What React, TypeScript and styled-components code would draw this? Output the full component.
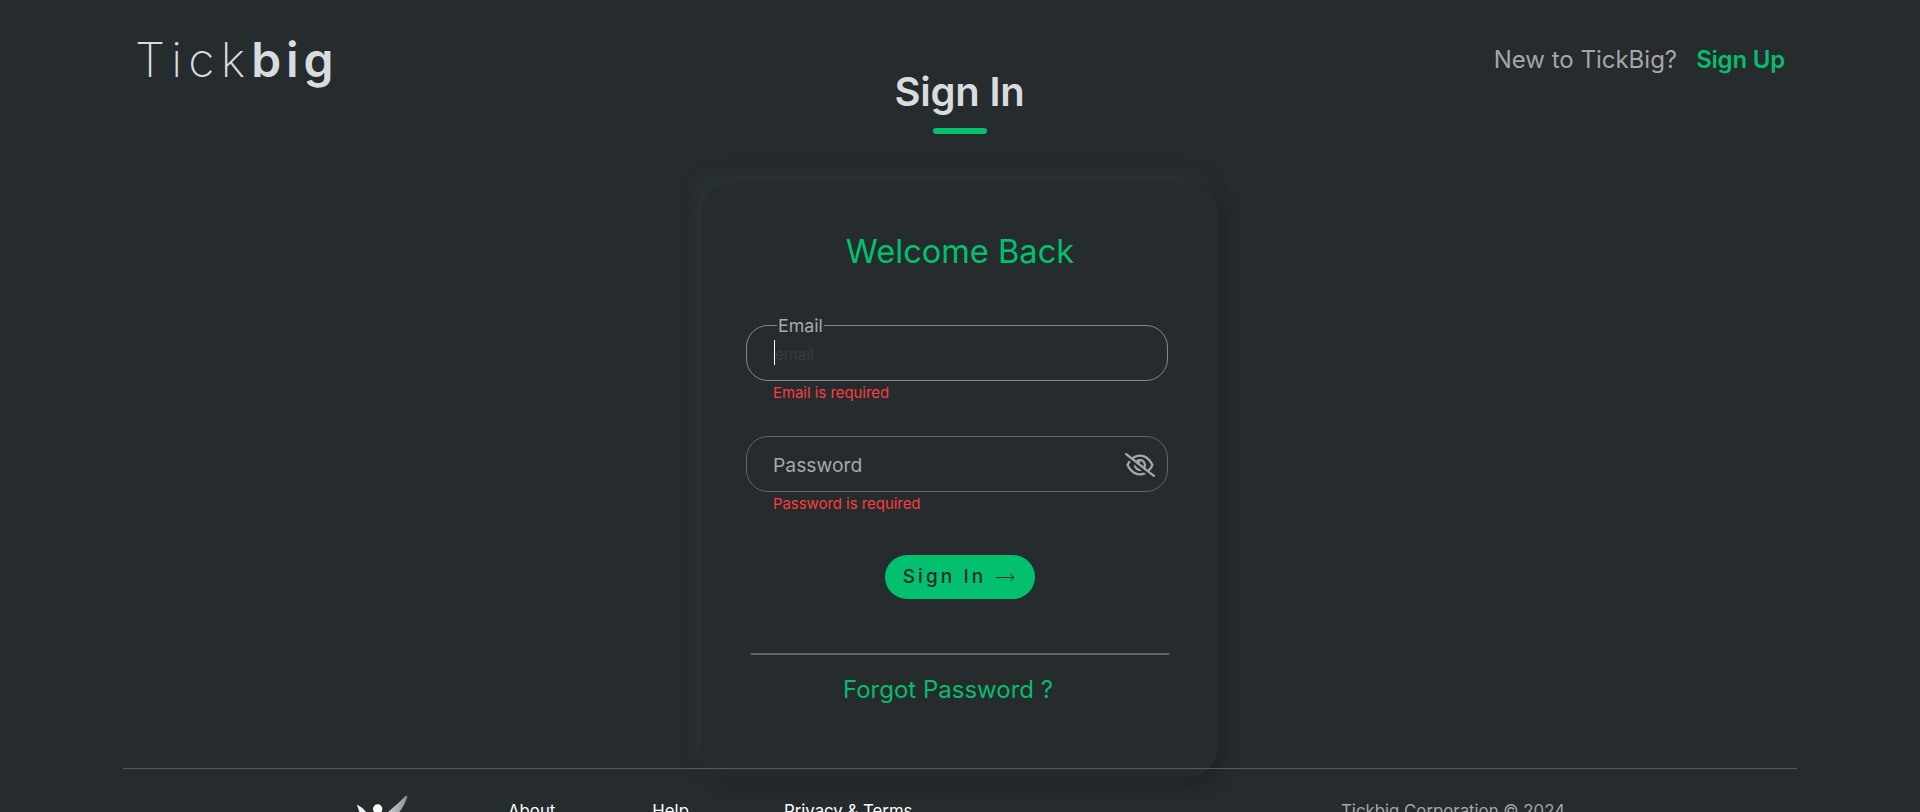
import React from "react";
import styled, { createGlobalStyle } from "styled-components";
import { FaRegEyeSlash } from "react-icons/fa6";

const GlobalStyle = createGlobalStyle`
  * { box-sizing: border-box; }
  body {
    margin: 0;
    background: #262b2d;
    color: #d9dcde;
    font-family: Inter, "Liberation Sans", sans-serif;
    overflow: hidden;
  }
`;

const Page = styled.div`
  height: 812px;
  overflow: hidden;
  display: flex;
  flex-direction: column;
`;

const Header = styled.header`
  display: flex;
  justify-content: space-between;
  align-items: center;
  height: 68px;
  padding: 52px 135px 0 135px;
  flex: none;
`;

const Logo = styled.div`
  font-size: 48px;
  font-weight: 200;
  letter-spacing: 6.2px;
  line-height: 60px;
`;

const LogoStrong = styled.span`
  font-weight: 600;
  letter-spacing: 4.8px;
`;

const Prompt = styled.div`
  display: flex;
  gap: 19px;
  font-size: 24px;
  line-height: 30px;
  color: #a6a6a6;
`;

const SignUpLink = styled.a`
  color: #07bc6c;
  font-weight: 600;
  letter-spacing: -0.2px;
`;

const Main = styled.main`
  flex: none;
  height: 700px;
  display: flex;
  flex-direction: column;
  align-items: center;
`;

const Title = styled.h1`
  margin: 0;
  font-size: 40px;
  font-weight: 600;
  line-height: 48px;
  letter-spacing: -0.2px;
  padding-right: 1px;
`;

const TitleBar = styled.div`
  flex: none;
  width: 54px;
  height: 6px;
  margin-top: 12px;
  border-radius: 3px;
  background: #03c06f;
`;

const Card = styled.section`
  flex: none;
  width: 516px;
  height: 595px;
  margin-top: 48px;
  padding: 49px 44px 0;
  border-radius: 30px;
  background: #262b2d;
  box-shadow: 6px 6px 14px #202425, -6px -6px 16px #2c3638;
`;

const Welcome = styled.h2`
  margin: 0 0 54px;
  font-size: 32.6px;
  font-weight: 400;
  line-height: 40px;
  text-align: center;
  color: #03c06f;
`;

const Field = styled.div<{ $active?: boolean }>`
  position: relative;
  display: flex;
  align-items: center;
  justify-content: space-between;
  width: 422px;
  height: 56px;
  padding: 0 12px 0 26px;
  border: 1px solid ${(p) => (p.$active ? "#858788" : "#656565")};
  border-radius: 22px;
  color: #a6a9aa;
  font-size: 19.3px;
`;

const FieldText = styled.span`
  padding-top: 1px;
`;

const FloatingLabel = styled.label`
  position: absolute;
  top: -12px;
  left: 30px;
  padding: 0 1px;
  background: #262b2d;
  font-size: 17.8px;
  line-height: 24px;
`;

const Placeholder = styled.span`
  height: 25px;
  margin: 0 0 1px 1px;
  border-left: 1px solid #ffffff;
  color: #363b3d;
  font-size: 15.6px;
  line-height: 30px;
  letter-spacing: -0.1px;
`;

const EyeToggle = styled(FaRegEyeSlash)`
  width: 30px;
  height: 24px;
  margin-top: 2px;
`;

const ErrorText = styled.p`
  margin: 0 0 33px;
  padding: 2px 0 0 27px;
  color: #fb3d3d;
  font-size: 14.9px;
  line-height: 20px;
`;

const SubmitButton = styled.button`
  display: flex;
  align-items: center;
  justify-content: center;
  gap: 10px;
  width: 150px;
  height: 44px;
  margin: 41px auto 0;
  padding: 0 2px 0 0;
  border: 0;
  border-radius: 22px;
  background: #03c06f;
  color: #262b2d;
  font: 500 19px Inter, sans-serif;
  letter-spacing: 3.1px;
`;

const ButtonText = styled.span`
  padding-bottom: 2px;
`;

const Divider = styled.hr`
  width: 418px;
  height: 2px;
  margin: 54px 0 0 5px;
  border: 0;
  background: #656565;
`;

const ForgotLink = styled.a`
  display: block;
  margin: 20px 24px 0 0;
  text-align: center;
  color: #07bc6c;
  font-size: 24px;
  line-height: 30px;
`;

const Footer = styled.footer`
  position: relative;
  flex: none;
  display: flex;
  height: 90px;
  margin: 0 123px;
  padding: 27px 0 0 233px;
  border-top: 1px solid #555a5c;
  color: #ffffff;
  font-size: 16.8px;
  line-height: 30px;
`;

const Emblem = styled.svg`
  flex: none;
  width: 52px;
  height: 40px;
`;

const FooterLink = styled.a<{ $gap: number }>`
  margin-left: ${(p) => p.$gap}px;
`;

const Copyright = styled.span`
  margin-left: auto;
  margin-right: 232px;
  color: #a6a6a6;
`;

export default function App() {
  return (
    <Page>
      <GlobalStyle />
      <Header>
        <Logo>
          Tick<LogoStrong>big</LogoStrong>
        </Logo>
        <Prompt>
          <span>New to TickBig?</span>
          <SignUpLink>Sign Up</SignUpLink>
        </Prompt>
      </Header>
      <Main>
        <Title>Sign In</Title>
        <TitleBar />
        <Card>
          <Welcome>Welcome Back</Welcome>
          <Field $active>
            <FloatingLabel>Email</FloatingLabel>
            <Placeholder>email</Placeholder>
          </Field>
          <ErrorText>Email is required</ErrorText>
          <Field>
            <FieldText>Password</FieldText>
            <EyeToggle />
          </Field>
          <ErrorText>Password is required</ErrorText>
          <SubmitButton>
            <ButtonText>Sign In</ButtonText>
            <svg width="19" height="8" viewBox="0 0 19 8" fill="none" stroke="currentColor">
              <path d="M0 4.5H18M14 1L18 4.5L14 8" />
            </svg>
          </SubmitButton>
          <Divider />
          <ForgotLink>Forgot Password ?</ForgotLink>
        </Card>
      </Main>
      <Footer>
        <Emblem viewBox="0 0 52 40">
          <defs>
            <linearGradient id="wing" x1="0" x2="1">
              <stop offset="0" stopColor="#e4e4e4" />
              <stop offset="1" stopColor="#8b8d8e" />
            </linearGradient>
          </defs>
          <path d="M1 8.5Q8 12 13 20L22 40Q6 28 1 8.5Z" fill="#f4f4f4" />
          <circle cx="21.7" cy="13" r="4.7" fill="#fff" />
          <path d="M52 -2.5Q50 8 42.5 17L24 40L27 20Q41 9 52 -2.5Z" fill="url(#wing)" />
        </Emblem>
        <FooterLink $gap={100}>About</FooterLink>
        <FooterLink $gap={97}>Help</FooterLink>
        <FooterLink $gap={95}>Privacy &amp; Terms</FooterLink>
        <Copyright>Tickbig Corporation © 2024</Copyright>
      </Footer>
    </Page>
  );
}
